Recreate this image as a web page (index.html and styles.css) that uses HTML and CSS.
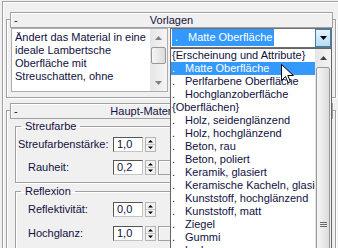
FILE: index.html
```html
<!DOCTYPE html>
<html>
	<head>
		<meta charset="utf-8">
		<title>Vorlagen</title>
		<link rel="stylesheet" href="styles.css">
	</head>
	<body>
		<div class="cmdpanel">
			<section class="rollout">
				<div class="rollout-head"><span class="toggle">-</span><span class="title">Vorlagen</span></div>
				<div class="templates">
					<div class="memo">
						<p>Ändert das Material in eine<br>ideale Lambertsche<br>Oberfläche mit<br>Streuschatten, ohne</p>
						<div class="vscroll">
							<div class="sb-btn"><svg width="7" height="4" viewBox="0 0 7 4"><path d="M0 4h7L3.5 0z" fill="#808080"/></svg></div>
							<div class="sb-track"><div class="sb-thumb"></div></div>
							<div class="sb-btn"><svg width="7" height="4" viewBox="0 0 7 4"><path d="M0 0h7L3.5 4z" fill="#808080"/></svg></div>
						</div>
					</div>

					<div class="combo">
						<div class="combo-field">
							<div class="combo-value"><span class="hl"><span class="bullet">.</span>Matte Oberfläche</span></div>
							<div class="combo-btn"><svg width="7" height="4" viewBox="0 0 7 4"><path d="M0 0h7L3.5 4z" fill="#000"/></svg></div>
						</div>

						<div class="droplist">
							<ul class="items">
								<li>{Erscheinung und Attribute}</li>
								<li class="sel"><span class="bullet">.</span>Matte Oberfläche</li>
								<li><span class="bullet">.</span>Perlfarbene Oberfläche</li>
								<li><span class="bullet">.</span>Hochglanzoberfläche</li>
								<li>{Oberflächen}</li>
								<li><span class="bullet">.</span>Holz, seidenglänzend</li>
								<li><span class="bullet">.</span>Holz, hochglänzend</li>
								<li><span class="bullet">.</span>Beton, rau</li>
								<li><span class="bullet">.</span>Beton, poliert</li>
								<li><span class="bullet">.</span>Keramik, glasiert</li>
								<li><span class="bullet">.</span>Keramische Kacheln, glasiert</li>
								<li><span class="bullet">.</span>Kunststoff, hochglänzend</li>
								<li><span class="bullet">.</span>Kunststoff, matt</li>
								<li><span class="bullet">.</span>Ziegel</li>
								<li><span class="bullet">.</span>Gummi</li>
								<li><span class="bullet">.</span>Leder</li>
							</ul>
							<div class="vscroll list-scroll">
								<div class="sb-btn"><svg width="7" height="4" viewBox="0 0 7 4"><path d="M0 4h7L3.5 0z" fill="#404040"/></svg></div>
								<div class="sb-track">
									<div class="sb-thumb long">
										<svg width="7" height="6" viewBox="0 0 7 6"><path d="M0 .5h7M0 2.5h7M0 4.5h7" stroke="#6a6a6a"/></svg>
									</div>
								</div>
							</div>
						</div>
					</div>
				</div>
			</section>

			<section class="rollout">
				<div class="rollout-head"><span class="toggle">-</span><span class="title">Haupt-Materialparameter</span></div>

				<fieldset class="group">
					<legend>Streufarbe</legend>
					<div class="row">
						<label class="lbl">Streufarbenstärke:</label>
						<span class="field">1,0</span>
						<svg class="spin" width="11" height="15" viewBox="0 0 11 15"><rect x=".5" y=".5" width="10" height="14" fill="#f2f2f2" stroke="#b4b4b4"/><path d="M1 7.5h9" stroke="#c8c8c8"/><path d="M3 5.5h5L5.5 3z M3 9.5h5L5.5 12z" fill="#000"/></svg>
					</div>
					<div class="row">
						<label class="lbl indent">Rauheit:</label>
						<span class="field">0,2</span>
						<svg class="spin" width="11" height="15" viewBox="0 0 11 15"><rect x=".5" y=".5" width="10" height="14" fill="#f2f2f2" stroke="#b4b4b4"/><path d="M1 7.5h9" stroke="#c8c8c8"/><path d="M3 5.5h5L5.5 3z M3 9.5h5L5.5 12z" fill="#000"/></svg>
						<span class="mapbtn"></span>
					</div>
				</fieldset>

				<fieldset class="group">
					<legend>Reflexion</legend>
					<div class="row">
						<label class="lbl indent">Reflektivität:</label>
						<span class="field">0,0</span>
						<svg class="spin" width="11" height="15" viewBox="0 0 11 15"><rect x=".5" y=".5" width="10" height="14" fill="#f2f2f2" stroke="#b4b4b4"/><path d="M1 7.5h9" stroke="#c8c8c8"/><path d="M3 5.5h5L5.5 3z M3 9.5h5L5.5 12z" fill="#000"/></svg>
					</div>
					<div class="row">
						<label class="lbl indent">Hochglanz:</label>
						<span class="field">1,0</span>
						<svg class="spin" width="11" height="15" viewBox="0 0 11 15"><rect x=".5" y=".5" width="10" height="14" fill="#f2f2f2" stroke="#b4b4b4"/><path d="M1 7.5h9" stroke="#c8c8c8"/><path d="M3 5.5h5L5.5 3z M3 9.5h5L5.5 12z" fill="#000"/></svg>
						<span class="mapbtn"></span>
					</div>
					<div class="row">
						<label class="lbl indent">Glanzproben:</label>
						<span class="field">8</span>
						<svg class="spin" width="11" height="15" viewBox="0 0 11 15"><rect x=".5" y=".5" width="10" height="14" fill="#f2f2f2" stroke="#b4b4b4"/><path d="M1 7.5h9" stroke="#c8c8c8"/><path d="M3 5.5h5L5.5 3z M3 9.5h5L5.5 12z" fill="#000"/></svg>
					</div>
				</fieldset>
			</section>
		</div>

		<svg class="cursor" width="13" height="20" viewBox="0 0 13 20"><path d="M.5 .5v16l4-4 2.6 6.2 2.3-1-2.6-6.2h5.6z" fill="#fff" stroke="#000"/></svg>
	</body>
</html>
```

FILE: styles.css
```css
html,body {
	margin: 0;
	padding: 0;
	height: 248px;
	overflow: hidden;
}

body {
	background-color: #f0f0f0;
	font: 11px/13px "Liberation Sans", Arial, sans-serif;
	color: #101040;
}

.cmdpanel {
	margin: 1px 0 0 2px;
	border-left: 1px solid #a0a0a0;
	border-top: 1px solid #a0a0a0;
	box-shadow: inset 1px 1px #fff;
}

.rollout {
	margin: 17px 2px 0 3px;
	border: 1px solid #a0a0a0;
	box-shadow: inset 1px 1px #fff, 1px 1px #fff;
	padding-bottom: 5px;
}

.rollout + .rollout {
	margin-top: 12px;
}

.rollout-head {
	margin: -8px 2px 0 3px;
	height: 14px;
	border: 1px solid #a0a0a0;
	background-color: #f0f0f0;
	box-shadow: inset 1px 1px #fff;
	display: grid;
	grid-template-columns: 1fr auto 1fr;
	line-height: 15px;
	white-space: nowrap;
}

.toggle {
	padding-left: 3px;
}

/* Vorlagen */
.templates {
	display: flex;
	gap: 2px;
	margin-left: 4px;
	align-items: flex-start;
}

.memo {
	display: flex;
	width: 157px;
	height: 64px;
	box-sizing: border-box;
	border: 1px solid #abadb3;
	background-color: #fff;
}

.memo p {
	flex: 1;
	margin: 0;
	padding: 2px 0 0 3px;
	white-space: nowrap;
}

.vscroll {
	width: 17px;
	display: flex;
	flex-direction: column;
	background: linear-gradient(90deg, #e6e6e6, #f4f4f4);
}

.sb-btn {
	height: 17px;
	flex: none;
	display: grid;
	place-items: center;
}

.sb-track {
	flex: 1;
	overflow: hidden;
}

.sb-thumb {
	margin: 1px 1px 0 1px;
	height: 17px;
	box-sizing: border-box;
	border: 1px solid #979797;
	border-radius: 2px;
	background: linear-gradient(90deg, #f6f6f6, #dcdcdc);
}

.sb-thumb.long {
	height: 316px;
	display: grid;
	place-items: center;
}

.combo {
	position: relative;
	width: 162px;
}

.combo-field {
	display: flex;
	height: 18px;
	border: 1px solid #707070;
	background-color: #fff;
}

.combo-value {
	flex: 1;
	padding-left: 1px;
}

.hl {
	display: inline-block;
	background-color: #3399ff;
	color: #fff;
	padding: 0 2px 0 3px;
	line-height: 17px;
}

.bullet {
	display: inline-block;
	width: 13px;
}

.combo-btn {
	width: 14px;
	border: 1px solid #3c7fb1;
	background: linear-gradient(#e5f4fc, #b3dcf3);
	display: grid;
	place-items: center;
}

.droplist {
	position: absolute;
	z-index: 5;
	top: 100%;
	left: 0;
	right: 0;
	height: 260px;
	border: 1px solid #646464;
	background-color: #fff;
	display: flex;
}

.items {
	flex: 1;
	margin: 0;
	padding: 0;
	list-style: none;
	overflow: hidden;
}

.items li {
	height: 13px;
	padding-left: 1px;
	white-space: nowrap;
}

.items li.sel {
	background-color: #3399ff;
	color: #fff;
}

.list-scroll {
	width: 16px;
}

/* Haupt-Materialparameter */
.group {
	margin: 1px 8px 0 8px;
	padding: 0 0 7px 0;
	border: 1px solid #a0a0a0;
	box-shadow: inset 1px 1px #fff, 1px 1px #fff;
	min-width: 0;
}

.group + .group {
	margin-top: 2px;
}

.group legend {
	margin-left: 5px;
	padding: 0 4px;
	line-height: 13px;
}

.row {
	display: flex;
	align-items: center;
	height: 15px;
	margin-top: 8px;
}

.row:first-of-type {
	margin-top: 4px;
}

.group + .group .row {
	margin-top: 9px;
}

.group + .group .row:first-of-type {
	margin-top: 4px;
}

.lbl {
	flex: 0 0 97px;
	box-sizing: border-box;
	padding-left: 2px;
	white-space: nowrap;
}

.lbl.indent {
	padding-left: 12px;
}

.field {
	width: 30px;
	height: 15px;
	box-sizing: border-box;
	border: 1px solid;
	border-color: #555 #c4c4c4 #c4c4c4 #555;
	background-color: #fff;
	padding-left: 3px;
	line-height: 13px;
}

.spin {
	margin-left: 2px;
	flex: none;
}

.mapbtn {
	margin-left: 2px;
	width: 20px;
	height: 15px;
	box-sizing: border-box;
	border: 1px solid #a0a0a0;
	box-shadow: inset 1px 1px #fff;
}

.cursor {
	position: absolute;
	left: 281px;
	top: 64px;
	z-index: 10;
}
```
